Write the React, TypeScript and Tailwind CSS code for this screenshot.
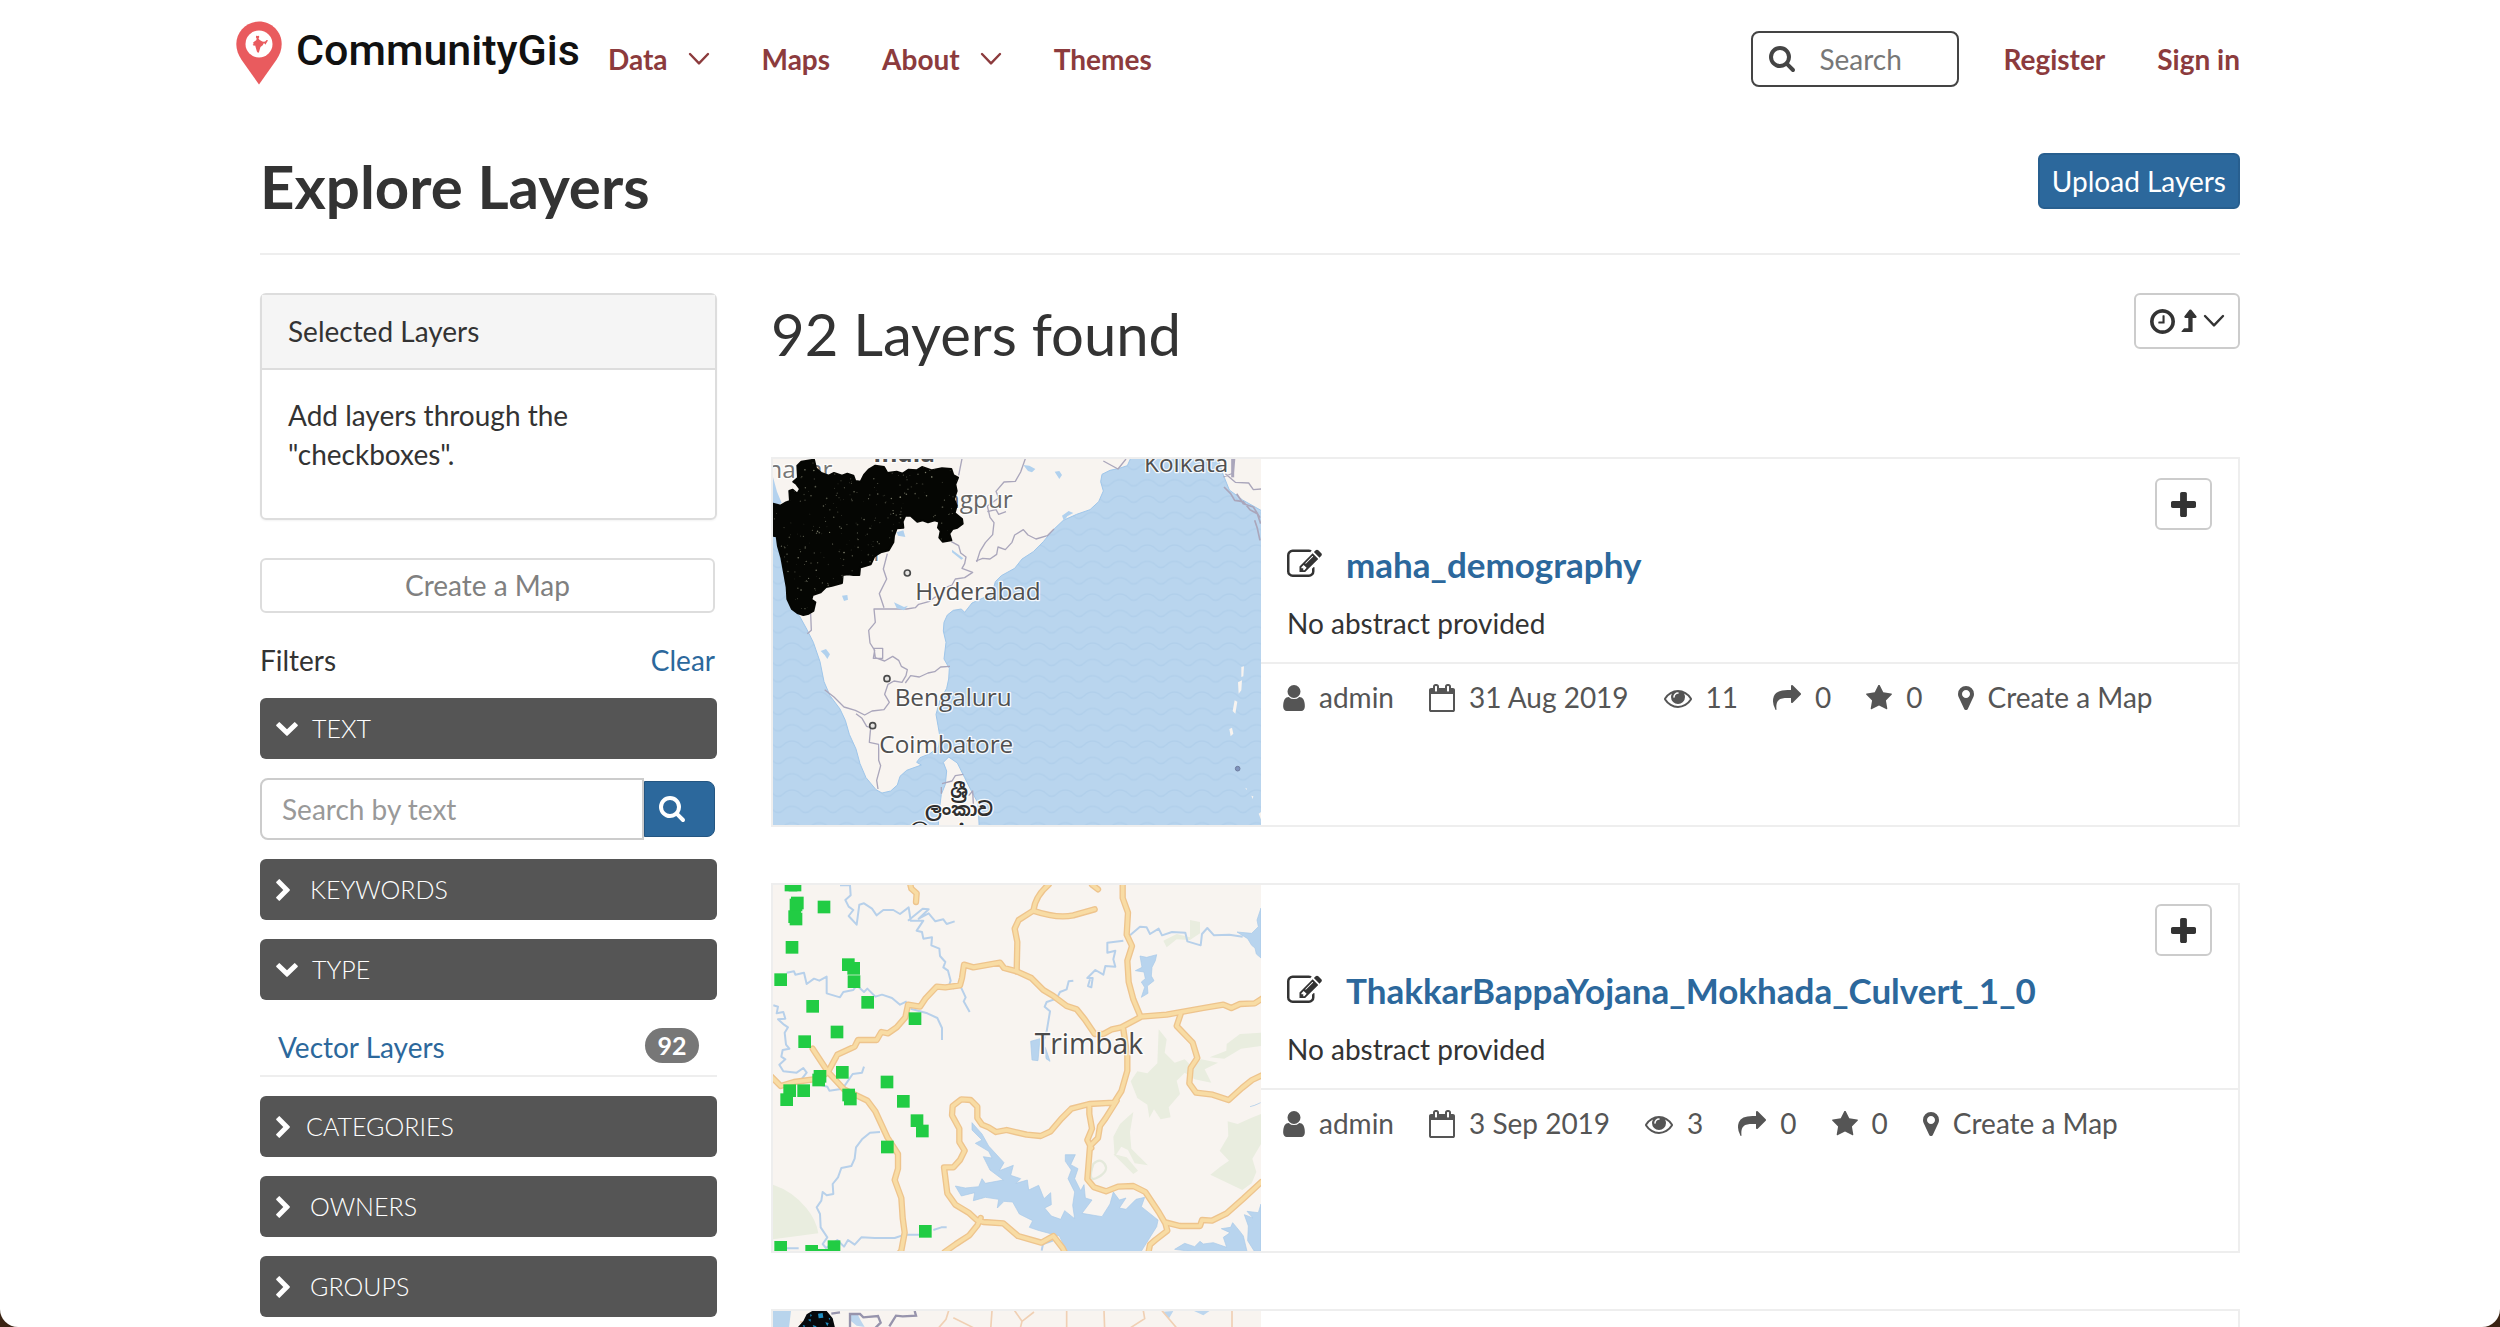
import React, { type ReactNode } from "react";

/* ---------- icons ---------- */

const ICONS = {
  edit: "M888 1184l116-116-152-152-116 116v56h96v96h56zm440-720q-16-16-33 1l-350 350q-17 17-1 33t33-1l350-350q17-17 1-33zm80 594v190q0 119-84.5 203.5t-203.5 84.5h-832q-119 0-203.5-84.5t-84.5-203.5v-832q0-119 84.5-203.5t203.5-84.5h832q63 0 117 25 15 7 18 23 3 17-9 29l-49 49q-14 14-32 8-23-6-45-6h-832q-66 0-113 47t-47 113v832q0 66 47 113t113 47h832q66 0 113-47t47-113v-126q0-13 9-22l64-64q15-15 35-7t20 29zm-96-738l288 288-672 672h-288v-288zm444 132l-92 92-288-288 92-92q28-28 68-28t68 28l152 152q28 28 28 68t-28 68z",
  star: "M1728 647q0 22-26 48l-363 354 86 500q1 7 1 20 0 21-10.5 35.5t-30.5 14.5q-19 0-40-12l-449-236-449 236q-22 12-40 12-21 0-31.5-14.5t-10.5-35.5q0-6 2-20l86-500-364-354q-25-27-25-48 0-37 56-46l502-73 225-455q19-41 49-41t49 41l225 455 502 73q56 9 56 46z",
  share: "M1792 640q0 26-19 45l-512 512q-19 19-45 19t-45-19-19-45v-256h-224q-98 0-175.5 6t-154 21.5-133 42.5-105.5 69.5-80 101-48.5 138.5-17.5 181q0 55 5 123 0 6 2.5 23.5t2.5 26.5q0 15-8.5 25t-23.5 10q-16 0-28-17-7-9-13-22t-13.5-30-10.5-24q-127-285-127-451 0-199 53-333 162-403 875-403h224v-256q0-26 19-45t45-19 45 19l512 512q19 19 19 45z",
  marker: "M1152 640q0-106-75-181t-181-75-181 75-75 181 75 181 181 75 181-75 75-181zm256 0q0 109-33 179l-364 774q-16 33-47.5 52t-67.5 19-67.5-19-46.5-52l-365-774q-33-70-33-179 0-212 150-362t362-150 362 150 150 362z",
  eye: "M1664 960q-152-236-381-353 61 104 61 225 0 185-131.5 316.5t-316.5 131.5-316.5-131.5-131.5-316.5q0-121 61-225-229 117-381 353 133 205 333.5 326.5t434.5 121.5 434.5-121.5 333.5-326.5zm-720-384q0-20-14-34t-34-14q-125 0-214.5 89.5t-89.5 214.5q0 20 14 34t34 14 34-14 14-34q0-86 61-147t147-61q20 0 34-14t14-34zm848 384q0 34-20 69-140 230-376.5 368.5t-499.5 138.5-499.5-139-376.5-368q-20-35-20-69t20-69q140-229 376.5-368t499.5-139 499.5 139 376.5 368q20 35 20 69z",
  user: "M1536 1399q0 109-62.5 187t-150.5 78h-854q-88 0-150.5-78t-62.5-187q0-85 8.5-160.5t31.5-152 58.5-131 94-89 134.5-34.5q131 128 313 128t313-128q76 0 134.5 34.5t94 89 58.5 131 31.5 152 8.500 160.5zm-256-887q0 159-112.5 271.5t-271.5 112.5-271.5-112.5-112.5-271.5 112.5-271.5 271.5-112.5 271.5 112.5 112.5 271.5z",
  calendar: "M192 1664h1408v-1024h-1408v1024zm384-1216v-288q0-14-9-23t-23-9h-64q-14 0-23 9t-9 23v288q0 14 9 23t23 9h64q14 0 23-9t9-23zm768 0v-288q0-14-9-23t-23-9h-64q-14 0-23 9t-9 23v288q0 14 9 23t23 9h64q14 0 23-9t9-23zm384-64v1280q0 52-38 90t-90 38h-1408q-52 0-90-38t-38-90v-1280q0-52 38-90t90-38h128v-96q0-66 47-113t113-47h64q66 0 113 47t47 113v96h384v-96q0-66 47-113t113-47h64q66 0 113 47t47 113v96h128q52 0 90 38t38 90z",
  plus: "M1600 736v192q0 40-28 68t-68 28h-416v416q0 40-28 68t-68 28h-192q-40 0-68-28t-28-68v-416h-416q-40 0-68-28t-28-68v-192q0-40 28-68t68-28h416v-416q0-40 28-68t68-28h192q40 0 68 28t28 68v416h416q40 0 68 28t28 68z",
  search: "M1216 832q0-185-131.5-316.5t-316.5-131.5-316.5 131.5-131.5 316.5 131.5 316.5 316.5 131.5 316.5-131.5 131.5-316.5zm512 832q0 52-38 90t-90 38q-54 0-90-38l-343-342q-179 124-399 124-143 0-273.5-55.5t-225-150-150-225-55.5-273.5 55.5-273.5 150-225 225-150 273.5-55.5 273.5 55.5 225 150 150 225 55.5 273.5q0 220-124 399l343 343q37 37 37 90z",
  clock: "M1024 544v448q0 14-9 23t-23 9h-320q-14 0-23-9t-9-23v-64q0-14 9-23t23-9h224v-352q0-14 9-23t23-9h64q14 0 23 9t9 23zm416 352q0-148-73-273t-198-198-273-73-273 73-198 198-73 273 73 273 198 198 273 73 273-73 198-198 73-273zm224 0q0 209-103 385.5t-279.5 279.5-385.5 103-385.5-103-279.5-279.5-103-385.5 103-385.5 279.5-279.5 385.5-103 385.5 103 279.5 279.5 103 385.5z",
};

function Icon({ name, box = "0 0 1792 1792", className }: { name: keyof typeof ICONS; box?: string; className: string }) {
  return (
    <svg viewBox={box} className={`shrink-0 ${className}`} fill="currentColor" aria-hidden="true">
      <path d={ICONS[name]} />
    </svg>
  );
}

function AngleDown() {
  return (
    <svg viewBox="0 0 22 14" className="h-[14px] w-[22px] shrink-0" fill="none" stroke="currentColor" strokeWidth="2.400" strokeLinecap="round" strokeLinejoin="round" aria-hidden="true">
      <path d="M2 2l9 9.400 9-9.400" />
    </svg>
  );
}

function ChevronDown() {
  return (
    <svg viewBox="0 0 22 14" className="h-[14px] w-[22px] shrink-0" fill="currentColor" aria-hidden="true">
      <path d="M10.300 13.600L.4 3.900q-.6-.6 0-1.200L2.700.4q.6-.6 1.200 0L11 7.300 18.100.4q.6-.6 1.200 0l2.300 2.300q.6.6 0 1.200L11.700 13.600q-.7.6-1.400 0z" />
    </svg>
  );
}

function ChevronRight() {
  return (
    <svg viewBox="0 0 14 22" className="h-[22px] w-[14px] shrink-0" fill="currentColor" aria-hidden="true">
      <path d="M13.600 11.700L3.900 21.600q-.6.6-1.200 0L.4 19.300q-.6-.6 0-1.200L7.300 11 .4 3.900q-.6-.6 0-1.200L2.700.4q.6-.6 1.200 0l9.700 9.900q.6.7 0 1.400z" />
    </svg>
  );
}

function LevelUp() {
  return (
    <svg viewBox="0 0 16 24" className="h-6 w-4 shrink-0" fill="currentColor" aria-hidden="true">
      <path d="M15.500 8.300q-.3.600-1 .6h-2.900v13.600q0 .6-.6.6H1q-.4 0-.5-.3t.1-.6l2.300-2.700q.2-.2.500-.2h3.900V8.900H4.500q-.8 0-1.100-.6t.2-1.200L8.500.8q.4-.4.9-.4t.9.4l5 6.300q.5.600.2 1.200z" />
    </svg>
  );
}

function LogoPin() {
  return (
    <svg viewBox="0 0 46 64" className="h-16 w-[46px] shrink-0" aria-hidden="true">
      <path d="M23 .5C10.500.5.300 10.600.300 23c0 6 2 10.700 5.200 15.800L23 63.500l17.500-24.700C43.700 33.700 45.700 29 45.700 23 45.700 10.600 35.500.5 23 .5z" fill="#e95b5e" />
      <circle cx="23" cy="23" r="13.500" fill="#fff" />
      <path d="M20.200 14.800l1.700.3 1-.3.400 1.300-.8 1.500 1.200 1.400 2.600 1.600 1.600.2 1.300-.4 1.400-1.300 1.400.2-.8 1.400-1 1.600-.6 1.500-.9-1.400-1.300.2-.4 1.300-2.500 2-.7 2.400-.8 2.700-.9 1.100-1.200-1.700-1.100-3.600-.6-2.300-1.400.3-1.200-1.200 1.400-.6-1.200-.9 1.600-1.600 1.800-1.300.5-1.500-.8-1.400z" fill="#e95b5e" />
    </svg>
  );
}

/* ---------- map thumbnails ---------- */

function speckles(count: number, x0: number, y0: number, w: number, h: number, start: number) {
  let seed = start;
  const next = () => {
    seed = (seed * 16807) % 2147483647;
    return seed / 2147483647;
  };
  return Array.from({ length: count }, () => ({ x: x0 + next() * w, y: y0 + next() * h, r: 0.8 + next() * 1.8, o: 0.2 + next() * 0.6 }));
}

const DISTRICT =
  "M112 76L124 64 162 58 168 84 184 98 206 106 222 98 246 106 262 100 280 106 286 122 302 124 312 104 326 88 346 76 372 80 382 98 410 94 428 100 446 88 470 90 486 80 516 90 546 84 574 86 580 104 594 112 586 132 590 152 582 176 590 196 584 218 606 236 608 250 592 262 578 266 568 280 574 300 548 304 538 292 542 272 534 262 538 244 524 240 504 246 488 240 472 244 452 226 436 226 428 244 430 262 410 264 402 286 400 306 386 330 362 336 352 342 342 350 332 372 300 382 298 404 280 404 264 402 248 404 246 428 216 436 198 440 182 456 158 464 154 478 166 486 160 512 146 520 130 524 112 518 96 506 82 476 80 440 72 396 64 352 54 318 50 288 39 286V190L62 196 78 186 90 182 88 152 98 148 112 160 120 146 110 132 100 124 114 112z";

function IndiaMap() {
  return (
    <svg viewBox="39 55 1464 1100" preserveAspectRatio="xMidYMid slice" className="block h-full w-full" role="img" aria-label="Map preview of maha_demography">
      <defs>
        <pattern id="waves" x="14" y="0" width="82" height="49" patternUnits="userSpaceOnUse">
          <path d="M0 20q14 0 24 10 17 18 34 0 10-10 24-10" fill="none" stroke="#a9cae6" strokeWidth="4" opacity=".55" />
        </pattern>
        <clipPath id="district">
          <path d={DISTRICT} />
        </clipPath>
      </defs>
      <rect x="39" y="55" width="1464" height="1100" fill="#b9d5ee" />
      <rect x="39" y="55" width="1464" height="1100" fill="url(#waves)" />
      <g fill="#f8f4f0" stroke="#9fc6ea" strokeWidth="3" strokeLinejoin="round">
        <path d="M30 45H1116L1102 76 1078 84 1050 90 1026 102 1022 124 1030 152 1016 184 990 208 950 222 910 240 876 272 850 304 820 334 786 356 764 384 724 406 706 424 700 446 676 470 636 488 614 516 604 506 580 510 562 524 552 546 550 572 558 606 552 656 568 684 566 716 560 744 540 780 528 822 534 856 540 890 536 920 510 940 480 952 470 966 484 974 440 990 420 1008 412 1034 392 1052 366 1058 348 1048 318 1012 300 970 288 926 268 882 256 840 240 806 210 766 192 724 180 664 160 606 140 566 118 526 96 506 82 466 74 410 60 350 48 290 30 270z" />
        <path d="M1372 45l16 54 20 50 40 30 60 34V45z" />
        <path d="M566 950l26 18 22 44 18 36 22 40 4 80H534l4-60 6-46 12-30 4-40-10-26z" />
      </g>
      <path d="M39 110v90l26-12-14-34z" fill="#b4d2ee" />
      <g fill="none" stroke="#aaa6bb" strokeWidth="4" strokeLinejoin="round">
        <path d="M606 55l-10 50M796 55l-14 40-16 28-34 2-24 28 8 20-34 24 8 34 12 16-4 36-22 24-16 26-10 32" />
        <path d="M682 214l26-6 8 14 22-8M648 362l20-8 22 2 20-14 4-22 22 8 20-22 8-22 26-16 14 16 24 12 34-10 20-20" />
        <path d="M574 304l22 12 6 22 16 12-4 20-8 14 32 12-24 16-28 4-10 18-20 8-8 24-22 4-20 14-30 8-10 10-26 4H342l4 40-20 24 4 38 14 22-4 24h28v-30h-26l4 28 28 10 24-14 18 12 8 18 18 10-4 18-12 20-24-4-18 10-10 30 14 24-16 22-36 4-22 12-28-14-34-10-30-30-28-22" />
        <path d="M382 340l-12 46 10 30-22 44 14 42M436 728l16-22 26 4 26-12 20-4 18-14 28-2M288 820l18 14 14 24 12 4-4 44 28 6v48l6 16-12 44 4 26M152 520l2 50-12 10M1030 62l44 24 24-30M1390 110l30-12 4-43M1396 100l30 26 40 2 14 20 24-2M546 1030l30-8 10-16 24-4M544 1040v20M626 1066l12-14 2 38" />
        <path d="M1392 140l20 20 12 20 26 4 20 24 22 12 10 30M1430 160l20 30 30 10 20 32M1484 240l8 24 8 36" strokeWidth="5" />
        <path d="M1418 55v56" strokeWidth="9" />
      </g>
      <g fill="#b1d1ee">
        <path d="M790 74l18 2 18 10-10 10-12-4zM884 94l14-2 8 12-8 12zM906 226l20-14 14 6-18 10-10 14zM410 276l20-6 6 20-22-4zM246 466l16-2 2 14-12 4zM182 632l16-6 12 16-8 14-8-12zM402 486l30 14 12-4-12 14-22-6zM576 328l18 14 16 12-6 4-28-22z" />
      </g>
      <g fill="#f8f4f0">
        <path d="M1444 680l8-2-2 30-6 2zM1434 726l12-6-2 30-8 10zM1424 780l8 4-6 36-8-8zM1408 866l8-4 4 18-8 8zM1474 1066l6 2-2 8zM1456 1042l5 3-2 4zM1496 1120l8-6v26z" />
      </g>
      <circle cx="1433" cy="985" r="7" fill="#7f93bd" stroke="#6e7c9e" strokeWidth="3" />
      <g fill="#505050" stroke="#fff" strokeOpacity=".85" strokeWidth="8" paintOrder="stroke" strokeLinejoin="round" fontFamily="'Open Sans', 'Noto Sans', sans-serif" fontSize="73">
        <text x="22" y="112" fill="#777">nagar</text>
        <text x="340" y="66" fontWeight="700">India</text>
        <text x="504" y="204" fill="#666">Nagpur</text>
        <text x="1152" y="95">Kolkata</text>
        <text x="340" y="362" fill="#777">i</text>
        <text x="466" y="480">Hyderabad</text>
        <text x="404" y="797">Bengaluru</text>
        <text x="358" y="937">Coimbatore</text>
      </g>
      <path d={DISTRICT} fill="#050603" stroke="#050603" strokeWidth="6" strokeLinejoin="round" />
      <g clipPath="url(#district)" fill="#a6a78f">
        {speckles(420, 40, 60, 560, 460, 4217).map((s, i) => (
          <circle key={i} cx={s.x} cy={s.y} r={s.r} opacity={s.o} />
        ))}
      </g>
      <g fill="#e6e4e2" stroke="#4a4a4a" strokeWidth="5">
        <circle cx="442" cy="398" r="9" />
        <circle cx="381" cy="715" r="9" />
        <circle cx="338" cy="856" r="9" />
      </g>
      <g fill="#2f2f2f" stroke="#fff" strokeOpacity=".85" strokeWidth="8" paintOrder="stroke" fontFamily="'Noto Sans Sinhala', 'Noto Sans', sans-serif" fontSize="56" fontWeight="700" textAnchor="middle">
        <text x="597" y="1074">ශ්‍රී</text>
        <text x="597" y="1128">ලංකාව</text>
        <text x="597" y="1198" fontSize="72">இலங்கை</text>
      </g>
    </svg>
  );
}

const SQUARES: [number, number][] = [
  [93, 43], [105, 43], [112, 97], [108, 103], [108, 145], [104, 138], [192, 109], [96, 230], [265, 282], [281, 293], [282, 333], [62, 327],
  [158, 407], [323, 395], [465, 444], [231, 484], [134, 513], [247, 605], [180, 617], [176, 628], [89, 660], [131, 660], [80, 687],
  [266, 673], [271, 685], [381, 634], [430, 692], [471, 750], [487, 781], [382, 829], [496, 1082], [62, 1130], [155, 1142], [186, 1154], [222, 1128],
];

const ROADS = [
  "M448 30l6 24 16 14-2 26M866 42q-40 34-46 78l-44 28-12 26 8 40-2 88M820 120q70 24 120 14l64-18M996 42l18 14M1088 42v40l16 44-4 66 16 34-14 44 4 64 14 52 20 48",
  "M204 604L232 552 284 528 294 508H350L364 484 384 488 410 470 436 440 444 402 480 408 496 384 530 348 556 350 600 344 606 322 612 282 640 290 720 276 732 292 770 302 814 322 850 358 880 376 920 406 950 416 974 446 1004 490H1030L1056 476 1084 470 1144 438 1220 432 1330 412 1390 402 1414 412 1440 400 1484 398 1506 384",
  "M204 604l-46-70M204 604l-26 20-76 10-40 12-30-30M204 604l48 52 70 34 24 32 36 78 32 50v44l-10 34 20 54 4 60 6 44-10 54-18 22 6 34",
  "M1090 476l12 80v44l-18 62-22 34-74 4-54 14-30 30-32 38-30 14-42-4-60-14-32 6-22-14-20-8-14-20v-34l-20-20-28-2-26 20-2 28 22 40v40l16 26-14 28-20 22H552l10 78 24 34 40 24 24 22 20 6 60 4 44 38 70 20 36-20 28 36 10 20M1070 690l-34 54-16 22-6 36-24 24-8 100 20 24 36 12 36-14 46-2 36 18 40 60 20 34 6 22-36 28-16 14-4 20M988 700v30l8 44-14 34 12 24M662 1042l-10 22-24 30-40 26-34 24",
  "M1262 430l-12 36 48 50 14 46-20 30-4 46 20 28 50 6 48 16 40-36 30-24 34-16M1220 1056l40 10h60l6-18 30 2 44-22 50-44 54-50",
];

function TrimbakMap() {
  return (
    <svg viewBox="39 42 1464 1100" preserveAspectRatio="xMidYMid slice" className="block h-full w-full" role="img" aria-label="Map preview of ThakkarBappaYojana_Mokhada_Culvert_1_0">
      <rect x="39" y="42" width="1464" height="1100" fill="#f8f4f0" />
      <g fill="#e9eddf">
        <path d="M39 942q60 20 100 70 30 36 36 76l-136 18zM1403 752l30 8 40-18 30-12v90l-26 44 12 40-14 34-28 20-96-46 30-24 26-18-28-30 26-44z" />
        <path d="M1196 476l24 30-6 40 30 30 30-10 20 20 30-20 50 10-40 20 20 40-50-10-30-20-24 24 10 40-34 40 6 30-30 6-20-30-14 26-6-40-30-20-20-50 20-30 30 6 30-30zM1290 148l30 6v34l-30 20-40-2-30 24-10-20 40-20 40 10zM1400 520l40-30 63-4v40l-60 8-50 30-44-4 50-20zM1080 760l40-36-10 60 4 50 50 50-40-6-20-40-20-10-20 30-4-60zM1060 850l40 10 34 40-14 10z" />
      </g>
      <path d="M1000 880q20-20 34 0t-20 40-14-40z" fill="none" stroke="#e4e9db" strokeWidth="7" />
      <g fill="none" stroke="#b7d0ea" strokeWidth="6" strokeLinejoin="round">
        <path d="M240 44h30l2 30-16 14 10 20 14 10-14 18 24 26 8-60 14-4 24 16 14 20 20-16h30l20 12 26-20 6 40h38l-20 30 16 4 4 20 26-4-2 24 24 10 2 22 16 18-6 16 14 10 8 30-4 12 14 12M444 150l44-36 18 2-30 28 30-16 20 24 24-6 10 14 24-8M80 306l22-4 4 10 26-6 8 34 22-16 16 6 22-12v50l40 12 10-16 30-6 10-14 22 20 10-10 24 24 20-6 30 10 24 20 20-10M452 414l50 14 30 14 14 30v36M40 404l14 4-4 20 20-4 6 20-22 2 18 16 12 8-10 16 4 36 10 12-20 4-4 20 12 8-18 16 12 20 40 4 20-14 10 14-14 18" />
        <path d="M603 350l14 30-6 12 18 32M940 330l-14 2-6 24-20 8-10 20-30 10-6 14 16 14-10 60-8 24M1090 210l-48 6v30l24-6-6 26 6 22-30-2-6 26-24-14-24 24h16l-4 28-10-4 6-20M1110 194l30-26 20 2 10 20 26-16 10 20 30-10 40 2 6 26 40 12 4-34 16-18 20 22 46-2 40 6M160 636l42 12 6 12 40-6 30-44 28-4 6-18M360 784l-30 2-24 20-18 24-4 34-10 22-30 6-10 28-16 20 2 30-20 4-12-10-4 26-14 20 10 20 2 40 20 30-14 20 10 12 34-24 20 20 12-20 20 14 20-22 40 2h60l30-10h70M520 1078l24-8h16M845 1140l4-20 30-10M80 1133h36" />
      </g>
      <g fill="#b8d4ee" stroke="#a8c9e8" strokeWidth="2">
        <path d="M636 756l30 34 20 36 46 50-14 24 42-16-8 30 30 10-14 14 34-10 4 30 30-14 16 40 20-18 2 36-20 10 20 24 28 10 12-26 30 24-6-40 6-40-20-40 10-26-18-26v-20h30l-14 30 22 12-10 30 18 36 10-18 4 40 20 6-30 40 60 10 24-38 10-36 18 24 20-6-20 30 20 4 30-30 26-6-10 28 50 40-4 20-50 80H924l-26-52-60-16-30-10 10-20-40-20-20-36-26-2-20 20 4-26-40-6-36 10 4-24-40 10-18-30 30 6 40-4 10-24 10 14 54-10-40-30-20-40 26 4-10-20-40-24 20-10-30-30z" />
        <path d="M1244 1136l30-18 30 10 16-16 10 8 30-4 40 14-10-30 20-14-26-12 28-4 6-14 20 24 12 16 12 50-30 14zM1503 1000l-8 26-34-4 18 20-26-10 12 34-2 44 20 32h20zM1140 256l20 4 30-8-4 18-10 20-2 26 8 14-20 16 2 22-20 12 10-30-10-16 12-10-4-20-26-4 20-10zM1503 112l-12 36 4 20-20 20-44-4 32 20 12 20 10 8 4 18 14 12z" />
        <path d="M812 512l28-8-6 66-18-2zM856 530l14 42-12-8zM1470 708l14-4 18-8" />
      </g>
      <g fill="none" strokeLinejoin="round" strokeLinecap="round">
        {ROADS.map((d) => (
          <path key={d} d={d} stroke="#eec48d" strokeWidth="19" />
        ))}
        {ROADS.map((d) => (
          <path key={d} d={d} stroke="#f8dca4" strokeWidth="11" />
        ))}
      </g>
      <text x="824" y="551" fill="#4a4a4a" stroke="#fff" strokeOpacity=".8" strokeWidth="8" paintOrder="stroke" fontFamily="'Open Sans', 'Noto Sans', sans-serif" fontSize="85">
        Trimbak
      </text>
      {SQUARES.map(([x, y], i) => (
        <rect key={i} x={x - 19} y={y - 19} width="38" height="38" fill="#22cc44" />
      ))}
    </svg>
  );
}

function CoastMap() {
  return (
    <svg viewBox="39 1319 1464 1100" preserveAspectRatio="xMidYMid slice" className="block h-full w-full" role="img" aria-label="Map preview">
      <rect x="39" y="1319" width="1464" height="1100" fill="#f8f4f0" />
      <path d="M39 1319h54l-6 52v1048H39z" fill="#b8d4ec" />
      <path d="M268 1326l24 2 10 20 12 20-24-4-20-16zM1210 1322l30-2-14 24zM1300 1319h50l-20 14z" fill="#bcd6ee" />
      <g fill="none" stroke="#f0d0b4" strokeWidth="5">
        <path d="M566 1319l-8 26-26 30M696 1319l-4 56M580 1340l60 30M764 1319l22 32 36-28M786 1351l-6 24M920 1319v56M1032 1319l2 56M1150 1319l4 24-50 32M1206 1319l44 52M1416 1319v56M120 1352l40 10" />
      </g>
      <g fill="none" stroke="#9794ac" strokeWidth="7">
        <path d="M214 1328l26-4M270 1375v-46h30l10 10 44-4 8 20-16 16M388 1366l20-32 20 2 40-2-4-14" />
      </g>
      <path d="M130 1350l10-20 20-12 40 2 18 22 10 40v300H96l18-314z" fill="#06090c" />
      <g fill="#1f8fc4">
        <path d="M174 1328l14-2 2 14-14 2zM144 1346l8-2v8zM196 1354l10 2-4 10zM158 1362l12 4-8 6zM150 1330l6 2-4 6zM206 1340l5 2-3 6zM128 1362l8 2-4 6z" />
      </g>
    </svg>
  );
}

/* ---------- page parts ---------- */

const NAV = [
  { label: "Data", menu: true },
  { label: "Maps", menu: false },
  { label: "About", menu: true },
  { label: "Themes", menu: false },
];

function Header() {
  return (
    <header className="flex h-[118px] items-center justify-between">
      <div className="flex items-center">
        <a href="#home" className="-ml-6 flex items-start gap-[14px] self-start pb-3">
          <LogoPin />
          <span className="font-['Roboto',sans-serif] text-[43px] leading-[58px] font-medium text-[#111]">CommunityGis</span>
        </a>
        <nav className="ml-7 flex items-center gap-[52px] text-[28px] font-bold">
          {NAV.map((item) => (
            <a key={item.label} href={`#${item.label.toLowerCase()}`} className="flex items-center gap-5">
              {item.label}
              {item.menu && <AngleDown />}
            </a>
          ))}
        </nav>
      </div>
      <div className="flex items-center gap-[52px] text-[28px] font-bold">
        <label className="-mr-2 flex h-14 w-[208px] items-center gap-6 rounded-lg border-2 border-[#444] px-4 font-normal text-[#444]">
          <Icon name="search" box="64 128 1664 1664" className="h-[26px] w-[26px]" />
          <span className="sr-only">Search the site</span>
          <input type="text" placeholder="Search" className="w-full min-w-0 bg-transparent outline-none placeholder:text-[#777]" />
        </label>
        <a href="#register">Register</a>
        <a href="#signin">Sign in</a>
      </div>
    </header>
  );
}

function FilterBar({ label, open = false, tight = false }: { label: string; open?: boolean; tight?: boolean }) {
  return (
    <button type="button" aria-expanded={open} className={`flex h-[61px] w-full items-center rounded-md bg-[#555] px-4 text-[25px] font-light text-white ${open ? "gap-[14px]" : tight ? "gap-4" : "gap-5"}`}>
      {open ? <ChevronDown /> : <ChevronRight />}
      {label}
    </button>
  );
}

function Sidebar() {
  return (
    <aside className="w-[457px] shrink-0">
      <section className="rounded-md border-2 border-[#ddd] shadow-xs">
        <h2 className="border-b-2 border-[#ddd] bg-[#f5f5f5] px-[26px] py-[17px]">Selected Layers</h2>
        <p className="px-[26px] pt-[26px] pb-[44px]">
          Add layers through the
          <br />
          "checkboxes".
        </p>
      </section>
      <button type="button" className="mt-[38px] h-[55px] w-[455px] rounded-md border-2 border-[#ddd] text-[#808080]">
        Create a Map
      </button>
      <div className="mt-7 mb-[18px] flex justify-between pr-[2px]">
        <h2>Filters</h2>
        <a href="#clear" className="text-[#2c689c]">Clear</a>
      </div>
      <div className="flex flex-col gap-[19px]">
        <FilterBar label="TEXT" open />
        <form className="flex items-center pr-[2px]">
          <input type="text" aria-label="Search by text" placeholder="Search by text" className="h-[62px] min-w-0 flex-1 rounded-l-lg border-2 border-[#ccc] px-5 outline-none placeholder:text-[#999]" />
          <button type="submit" aria-label="Search" className="flex h-14 w-[71px] items-center rounded-r-lg border border-[#245682] bg-[#2c689c] pl-[14px] text-white">
            <Icon name="search" box="64 128 1664 1664" className="h-[26px] w-[26px]" />
          </button>
        </form>
        <FilterBar label="KEYWORDS" />
        <FilterBar label="TYPE" open />
        <div className="flex h-[58px] items-start justify-between border-b-2 border-[#eee] pt-[9px] pr-[18px] pl-[18px]">
          <a href="#vector" className="text-[#2c689c]">Vector Layers</a>
          <span className="flex h-[35px] w-[54px] items-center justify-center rounded-full bg-[#777] text-[25px] font-bold text-white">92</span>
        </div>
        <FilterBar label="CATEGORIES" tight />
        <FilterBar label="OWNERS" />
        <FilterBar label="GROUPS" />
      </div>
    </aside>
  );
}

function Meta({ icon, children }: { icon: ReactNode; children: ReactNode }) {
  return (
    <li className="flex items-center gap-[14px]">
      {icon}
      {children}
    </li>
  );
}

interface Layer {
  title: string;
  date: string;
  views: number;
  map: ReactNode;
}

const LAYERS: Layer[] = [
  { title: "maha_demography", date: "31 Aug 2019", views: 11, map: <IndiaMap /> },
  { title: "ThakkarBappaYojana_Mokhada_Culvert_1_0", date: "3 Sep 2019", views: 3, map: <TrimbakMap /> },
];

function CardFrame({ map, children }: { map: ReactNode; children?: ReactNode }) {
  return (
    <article className="flex border-2 border-[#eee]">
      <a href="#layer" className="h-[366px] w-[488px] shrink-0">{map}</a>
      <div className="min-w-0 flex-1">{children}</div>
    </article>
  );
}

function LayerCard({ layer }: { layer: Layer }) {
  return (
    <CardFrame map={layer.map}>
      <div className="flex justify-end pt-[19px] pr-[26px]">
        <button type="button" aria-label={`Select ${layer.title}`} className="flex h-[52px] w-[57px] items-center justify-center rounded-md border-2 border-[#ccc]">
          <Icon name="plus" box="192 128 1408 1408" className="h-[25px] w-[25px]" />
        </button>
      </div>
      <div className="border-b-2 border-[#eee] pr-6 pb-[19px] pl-[26px]">
        <h3 className="mt-[10px] flex h-[48px] items-center gap-6 text-[35px] font-bold">
          <Icon name="edit" className="h-[35px] w-[35px]" />
          <a href="#layer" className="text-[#2c689c]">{layer.title}</a>
        </h3>
        <p className="mt-4">No abstract provided</p>
      </div>
      <ul className="flex items-center gap-[35px] pt-[14px] pl-[22px] text-[#555]">
        <Meta icon={<Icon name="user" box="256 128 1280 1536" className="h-[26px] w-[22px]" />}>
          <a href="#admin">admin</a>
        </Meta>
        <Meta icon={<Icon name="calendar" box="64 0 1664 1792" className="h-[28px] w-[26px]" />}>{layer.date}</Meta>
        <Meta icon={<Icon name="eye" className="h-[28px] w-[28px]" />}>{layer.views}</Meta>
        <Meta icon={<Icon name="share" className="h-[28px] w-[28px]" />}>0</Meta>
        <Meta icon={<Icon name="star" box="64 64 1664 1664" className="h-[26px] w-[26px]" />}>0</Meta>
        <Meta icon={<Icon name="marker" box="384 128 1024 1536" className="h-6 w-4" />}>
          <a href="#create">Create a Map</a>
        </Meta>
      </ul>
    </CardFrame>
  );
}

export default function App() {
  return (
    <div className="h-screen bg-[#3b2414] font-['Lato',sans-serif] text-[28px] leading-[39px] text-[#333]">
      <div className="h-full overflow-hidden rounded-b-[18px] bg-white">
        <div className="mx-auto max-w-[1980px]">
          <div className="text-[#8c3b3d]">
            <Header />
          </div>
          <div className="flex items-start justify-between border-b-2 border-[#eee] pt-[35px] pb-[34px]">
            <h1 className="text-[60px] leading-[66px] font-bold">Explore Layers</h1>
            <a href="#upload" className="flex h-14 items-center rounded-md border-2 border-[#285f8f] bg-[#2c689c] px-3 text-white">Upload Layers</a>
          </div>
          <div className="flex items-start gap-[54px] pt-[38px]">
            <Sidebar />
            <main className="min-w-0 flex-1">
              <div className="flex items-start justify-between">
                <h2 className="mt-2 text-[58px] leading-[66px]">92 Layers found</h2>
                <button type="button" aria-label="Sort layers" className="flex h-14 w-[106px] items-center justify-center gap-[6px] rounded-md border-2 border-[#ccc]">
                  <Icon name="clock" box="128 128 1536 1536" className="h-[25px] w-[25px]" />
                  <LevelUp />
                  <AngleDown />
                </button>
              </div>
              <div className="mt-[90px] flex flex-col gap-14">
                {LAYERS.map((layer) => (
                  <LayerCard key={layer.title} layer={layer} />
                ))}
                <CardFrame map={<CoastMap />} />
              </div>
            </main>
          </div>
        </div>
      </div>
    </div>
  );
}
